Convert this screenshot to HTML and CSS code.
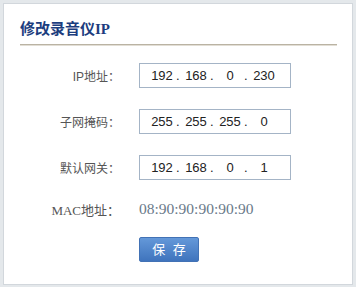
FILE: index.html
```html
<!DOCTYPE html>
<html lang="zh-CN">
<head>
<meta charset="utf-8">
<title>修改录音仪IP</title>
<link rel="stylesheet" href="styles.css">
</head>
<body>
<div class="panel">
  <h2 class="title">修改录音仪IP</h2>
  <div class="form">
    <div class="row">
      <label class="label">IP地址：</label>
      <div class="ip-box">
        <span class="octet">192</span><span class="dot">.</span>
        <span class="octet">168</span><span class="dot">.</span>
        <span class="octet">0</span><span class="dot">.</span>
        <span class="octet">230</span>
      </div>
    </div>
    <div class="row">
      <label class="label">子网掩码：</label>
      <div class="ip-box">
        <span class="octet">255</span><span class="dot">.</span>
        <span class="octet">255</span><span class="dot">.</span>
        <span class="octet">255</span><span class="dot">.</span>
        <span class="octet">0</span>
      </div>
    </div>
    <div class="row">
      <label class="label">默认网关：</label>
      <div class="ip-box">
        <span class="octet">192</span><span class="dot">.</span>
        <span class="octet">168</span><span class="dot">.</span>
        <span class="octet">0</span><span class="dot">.</span>
        <span class="octet">1</span>
      </div>
    </div>
    <div class="row row-static">
      <span class="label label-serif">MAC地址：</span>
      <span class="mac">08:90:90:90:90:90</span>
    </div>
    <div class="actions">
      <button class="btn" type="button">保&nbsp;存</button>
    </div>
  </div>
</div>
</body>
</html>
```

FILE: styles.css
```css
html, body {
  margin: 0;
  padding: 0;
}

body {
  background: #e4e8eb;
  padding: 3px 3px 2px 3px;
  font-family: "Liberation Sans", "Noto Sans CJK SC", sans-serif;
}

.panel {
  box-sizing: border-box;
  height: 282px;
  background: #ffffff;
  border: 1px solid #d2d7dc;
  padding: 15px 15px 0 16px;
}

.title {
  margin: 0;
  font-family: "Liberation Serif", "Noto Sans CJK SC", serif;
  font-size: 15px;
  font-weight: bold;
  line-height: 20px;
  color: #1c3d7e;
  padding-bottom: 5px;
  border-bottom: 1px solid #bab3a3;
  box-shadow: 0 1px 0 #e2ded5;
}

.form {
  margin-top: 18px;
}

.row {
  display: flex;
  align-items: center;
  height: 25px;
  margin-bottom: 21px;
}

.label {
  width: 100px;
  margin-right: 19px;
  text-align: right;
  font-size: 12px;
  color: #555555;
  white-space: nowrap;
}

.label-serif {
  font-family: "Liberation Serif", "Noto Sans CJK SC", serif;
  font-size: 13px;
}

.ip-box {
  box-sizing: border-box;
  width: 152px;
  height: 25px;
  border: 1px solid #a4b4c6;
  display: flex;
  align-items: center;
  padding-left: 8px;
  font-size: 13px;
  color: #222222;
}

.octet {
  width: 28px;
  text-align: center;
}

.dot {
  width: 6px;
  text-align: left;
}

.row-static {
  height: 16px;
  margin-bottom: 20px;
}

.mac {
  font-family: "Liberation Serif", serif;
  font-size: 15.5px;
  color: #6a7a8a;
}

.actions {
  padding-left: 119px;
}

.btn {
  box-sizing: border-box;
  width: 60px;
  height: 25px;
  padding: 0;
  border: 1px solid #4272b5;
  border-radius: 2px;
  background: linear-gradient(#6498d9, #3f74bd);
  color: #ffffff;
  font-family: "Liberation Sans", "Noto Sans CJK SC", sans-serif;
  font-size: 13px;
  line-height: 23px;
  letter-spacing: 2px;
  text-indent: 2px;
  cursor: pointer;
}
```
